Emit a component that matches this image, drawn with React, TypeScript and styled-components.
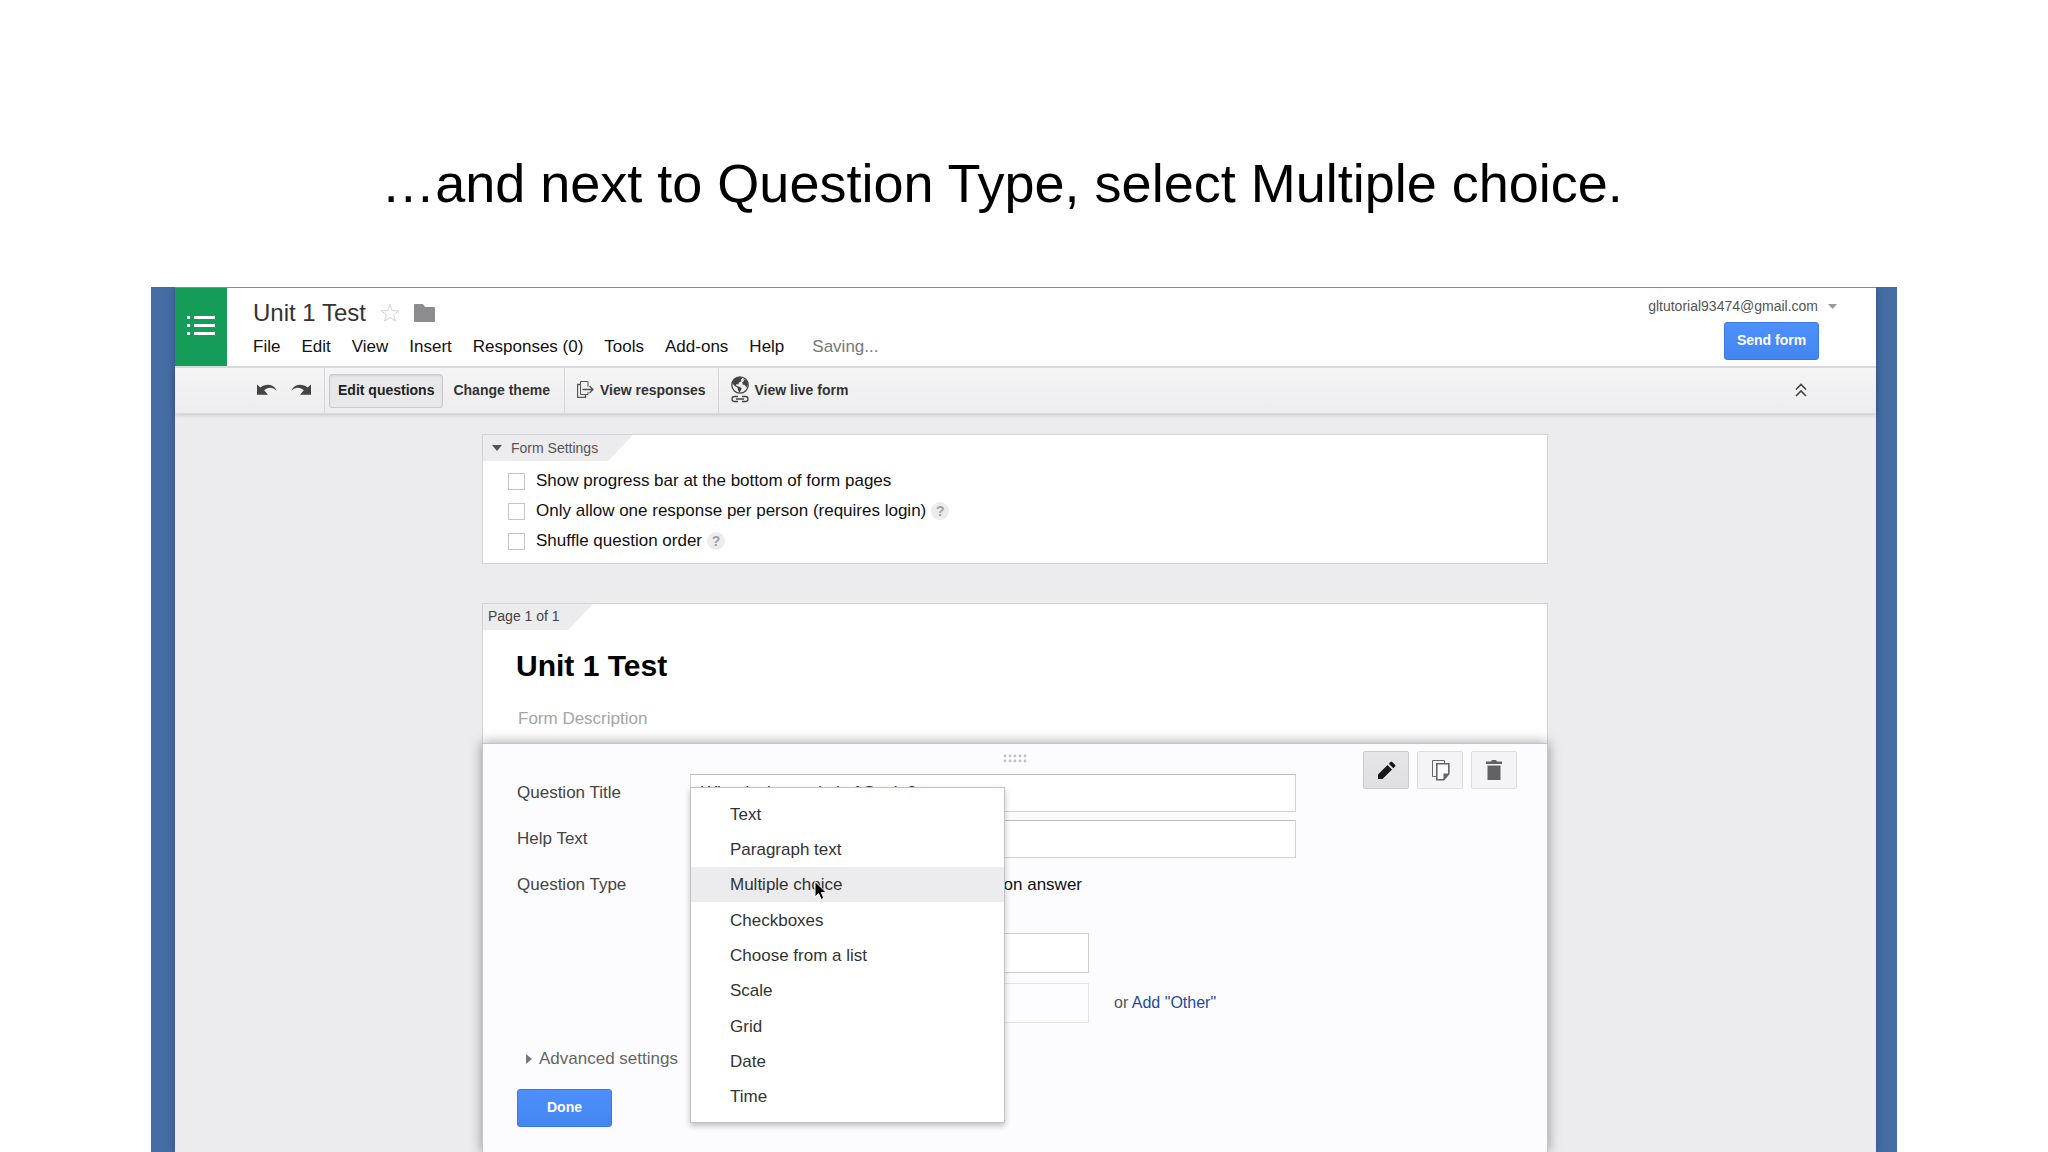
import React from "react";
import styled, { createGlobalStyle, css } from "styled-components";

const sans = `"Liberation Sans", Arial, Helvetica, sans-serif`;

const GlobalStyle = createGlobalStyle`
  *, *::before, *::after { box-sizing: border-box; }
  html, body { margin: 0; padding: 0; background: #fff; }
  body, button, input { font-family: ${sans}; }
  h1, h2, p { margin: 0; font-weight: normal; }
  button { margin: 0; padding: 0; border: 0; background: none; color: inherit; cursor: pointer; }
  svg { display: block; flex: none; }
`;

const Page = styled.div`
  display: flex;
  flex-direction: column;
  height: 100vh;
  overflow: hidden;
  padding: 0 151px;
`;

const Caption = styled.h1`
  flex: none;
  padding: 152px 44px 73px 0;
  font-size: 54px;
  line-height: 62px;
  text-align: center;
  white-space: nowrap;
  color: #000;
`;

const Desktop = styled.div`
  flex: 1;
  display: flex;
  padding: 0 21px 0 24px;
  overflow: hidden;
  background: #446ea4;
`;

const Window = styled.main`
  flex: 1;
  display: flex;
  flex-direction: column;
  min-width: 0;
  border-top: 1px solid #8b8b8d;
  background: #ecebee;
  box-shadow: 0 0 8px rgba(50, 40, 110, 0.55);
`;

const Header = styled.header`
  display: flex;
  flex: none;
  height: 80px;
  background: #fff;
  border-bottom: 2px solid #dfdfe1;
`;

const Logo = styled.div`
  display: flex;
  align-items: center;
  justify-content: center;
  width: 52px;
  padding-bottom: 2px;
  background: #149c58;
`;

const DocInfo = styled.div`
  flex: 1;
  display: flex;
  flex-direction: column;
  gap: 11px;
  padding: 12px 0 0 26px;
`;

const TitleRow = styled.div`
  display: flex;
  align-items: center;
  gap: 14px;
`;

const DocTitle = styled.h2`
  font-size: 24px;
  line-height: 26px;
  color: #333;
`;

const Menu = styled.nav`
  display: flex;
  gap: 21px;
  font-size: 17px;
  line-height: 20px;
  color: #111;
`;

const MenuButton = styled.button`
  font-size: 17px;
  line-height: 20px;
`;

const Status = styled.span`
  padding-left: 7px;
  color: #777;
`;

const Account = styled.div`
  display: flex;
  flex-direction: column;
  align-items: flex-end;
  gap: 8px;
  padding: 10px 39px 0 0;
`;

const AccountButton = styled.button`
  display: flex;
  align-items: center;
  gap: 10px;
  font-size: 14px;
  line-height: 16px;
  color: #555;
`;

const PrimaryButton = styled.button<{ $width: number }>`
  width: ${(p) => p.$width}px;
  height: 38px;
  padding-bottom: 2px;
  border: 1px solid #3b78e0;
  border-radius: 3px;
  background: linear-gradient(#4d90fe, #4486f0);
  color: #fff;
  font-size: 14px;
  font-weight: bold;
`;

const SendSlot = styled.div`
  padding-right: 18px;
`;

const Toolbar = styled.div`
  z-index: 1;
  flex: none;
  display: flex;
  align-items: center;
  height: 46px;
  padding: 0 69px 0 82px;
  background: linear-gradient(#f5f5f6, #ededef);
  border-bottom: 1px solid #dadadc;
  box-shadow: 0 1px 4px rgba(0, 0, 0, 0.16);
`;

const History = styled.div`
  display: flex;
  gap: 14px;
  padding: 0 9px 2px 0;
`;

const Divider = styled.span`
  align-self: stretch;
  width: 1px;
  margin: 0 4px;
  background: #d6d6d8;
`;

const ToolButton = styled.button<{ $active?: boolean; $icon?: boolean }>`
  display: flex;
  align-items: center;
  gap: 6px;
  height: 34px;
  padding: 0 ${(p) => (p.$icon ? 7 : 9)}px 2px;
  border: 1px solid transparent;
  border-radius: 3px;
  font-size: 14px;
  font-weight: bold;
  white-space: nowrap;
  color: #333;
  ${(p) =>
    p.$active &&
    css`
      padding: 0 8px 2px;
      border-color: #c9c9cb;
      background: linear-gradient(#e7e7e9, #e9e9eb);
      box-shadow: inset 0 1px 2px rgba(0, 0, 0, 0.08);
      color: #222;
    `}
`;

const Collapse = styled.button`
  margin-left: auto;
  padding-bottom: 2px;
`;

const Workspace = styled.div`
  flex: 1;
  display: flex;
  flex-direction: column;
  align-items: center;
  padding: 20px 21px 0 0;
`;

const Column = styled.div`
  flex: 1;
  display: flex;
  flex-direction: column;
  width: 100%;
  max-width: 1066px;
`;

const Card = styled.section`
  border: 1px solid #d3d2d5;
  background: #fff;
`;

const SettingsCard = styled(Card)`
  flex: none;
  margin-bottom: 39px;
`;

const PageCard = styled(Card)`
  flex: none;
  border-bottom: 0;
`;

const Tab = styled.div<{ $width: number }>`
  display: flex;
  align-items: center;
  width: ${(p) => p.$width}px;
  height: 26px;
  padding: 0 0 2px 5px;
  background: #ecebee;
  clip-path: polygon(0 0, 100% 0, calc(100% - 25px) 100%, 0 100%);
  font-size: 14px;
  line-height: 16px;
  color: #444;
`;

const TabButton = styled.button`
  display: flex;
  align-items: center;
  gap: 9px;
  padding: 1px 0 0 4px;
  font-size: 14px;
  line-height: 16px;
  color: #555;
`;

const Settings = styled.div`
  padding: 5px 25px 7px;
`;

const SettingRow = styled.div`
  display: flex;
  align-items: center;
  gap: 5px;
  height: 30px;
`;

const CheckLabel = styled.label<{ $gap: number }>`
  display: flex;
  align-items: center;
  gap: ${(p) => p.$gap}px;
  font-size: 17px;
  line-height: 20px;
  white-space: nowrap;
  color: #111;
`;

const Checkbox = styled.input.attrs({ type: "checkbox" })`
  appearance: none;
  width: 17px;
  height: 17px;
  margin: 0;
  border: 1px solid #c4c4c8;
  background: #fff;
`;

const HelpButton = styled.button`
  width: 18px;
  height: 18px;
  border-radius: 50%;
  background: #ececee;
  font-size: 14px;
  line-height: 18px;
  font-weight: bold;
  color: #a0a0a2;
`;

const PageIntro = styled.div`
  display: flex;
  flex-direction: column;
  gap: 26px;
  padding: 19px 33px 14px;
`;

const FormTitle = styled.h2`
  font-size: 30px;
  line-height: 34px;
  font-weight: bold;
  color: #000;
`;

const Description = styled.input`
  height: 20px;
  padding: 0 2px;
  border: 0;
  outline: 0;
  font-size: 17px;
  line-height: 20px;
  &::placeholder { color: #a5a5a7; opacity: 1; }
`;

const QuestionPanel = styled.section`
  flex: 1;
  display: grid;
  grid-template-columns: 1fr auto;
  grid-template-rows: 30px 1fr;
  padding: 0 30px 25px 34px;
  border: solid #c6c5c9;
  border-width: 1px 1px 0;
  background: #fcfbfe;
  box-shadow: 0 0 12px rgba(0, 0, 0, 0.4);
`;

const DragHandle = styled.div`
  grid-row: 1;
  grid-column: 1 / -1;
  justify-self: center;
  padding: 10px 4px 0 0;
`;

const Fields = styled.div`
  grid-row: 2;
  grid-column: 1;
`;

const Actions = styled.div`
  grid-row: 1 / span 2;
  grid-column: 2;
  display: flex;
  align-items: flex-start;
  gap: 8px;
  padding-top: 7px;
`;

const ActionButton = styled.button<{ $active?: boolean }>`
  display: flex;
  align-items: center;
  justify-content: center;
  width: 46px;
  height: 38px;
  border: 1px solid ${(p) => (p.$active ? "#cbcace" : "#dedde1")};
  border-radius: 2px;
  background: ${(p) => (p.$active ? "linear-gradient(#e6e6e8, #dfdfe1)" : "#f4f3f6")};
`;

const FieldGrid = styled.div`
  display: grid;
  grid-template-columns: 173px minmax(0, 606px);
  row-gap: 8px;
`;

const FieldLabel = styled.label`
  font-size: 17px;
  line-height: 38px;
  color: #444;
`;

const TextInput = styled.input`
  width: 100%;
  height: 38px;
  padding: 0 10px;
  border: 1px solid #d3d2d6;
  border-top-color: #bdbcc0;
  border-radius: 0;
  outline: 0;
  background: #fff;
  font-size: 17px;
  color: #333;
`;

const TypeCell = styled.div`
  position: relative;
  display: flex;
  align-items: center;
  justify-content: space-between;
  width: 392px;
`;

const TypeButton = styled.button`
  width: 150px;
  height: 36px;
  border: 1px solid #d3d2d6;
  background: #f4f3f6;
`;

const TypeMenu = styled.div`
  position: absolute;
  z-index: 2;
  left: 0;
  top: -79px;
  display: flex;
  flex-direction: column;
  width: 315px;
  height: 336px;
  padding: 8px 0;
  border: 1px solid #c3c2c6;
  background: #fff;
  box-shadow: 0 3px 6px rgba(0, 0, 0, 0.24);
`;

const TypeOption = styled.button<{ $active: boolean }>`
  position: relative;
  flex: 1;
  padding: 2px 0 0 39px;
  background: ${(p) => (p.$active ? "#ecebed" : "transparent")};
  font-size: 17px;
  text-align: left;
  color: #333;
`;

const Pointer = styled.svg`
  position: absolute;
  left: 123px;
  top: 13px;
`;

const Choices = styled.div`
  display: flex;
  flex-direction: column;
  gap: 10px;
  padding: 29px 0 24px 173px;
`;

const ChoiceRow = styled.div`
  display: flex;
  align-items: center;
  gap: 25px;
`;

const ChoiceInput = styled.input<{ $faded?: boolean }>`
  width: 399px;
  height: 40px;
  padding: 0 10px;
  border: 1px solid ${(p) => (p.$faded ? "#e4e3e7" : "#cfced2")};
  border-radius: 0;
  outline: 0;
  background: ${(p) => (p.$faded ? "#fdfcff" : "#fff")};
  font-size: 17px;
`;

const OrText = styled.span`
  font-size: 16px;
  line-height: 20px;
  color: #555;
`;

const AddLink = styled.a`
  color: #1a4b9c;
  text-decoration: none;
`;

const Advanced = styled.button`
  display: flex;
  align-items: center;
  gap: 7px;
  margin-bottom: 18px;
  padding-left: 9px;
  font-size: 17px;
  line-height: 24px;
  color: #666;
`;

const menuItems = ["File", "Edit", "View", "Insert", "Responses (0)", "Tools", "Add-ons", "Help"];

const settings = [
  { label: "Show progress bar at the bottom of form pages", help: false },
  { label: "Only allow one response per person (requires login)", help: true },
  { label: "Shuffle question order", help: true },
];

const questionTypes = [
  "Text",
  "Paragraph text",
  "Multiple choice",
  "Checkboxes",
  "Choose from a list",
  "Scale",
  "Grid",
  "Date",
  "Time",
];

const ListIcon = () => (
  <svg width="28" height="20" viewBox="0 0 28 20" fill="#fff">
    <path d="M0 0h3v3H0zM7 0h21v3H7zM0 8h3v3H0zM7 8h21v3H7zM0 16h3v3H0zM7 16h21v3H7z" />
  </svg>
);

const StarIcon = () => (
  <svg width="20" height="20" viewBox="0 0 20 20" fill="none" stroke="#d2d2d4" strokeWidth="1">
    <path d="M10 1.500l2.200 6.100 6.500.2-5.100 4 1.800 6.200-5.400-3.600L4.600 18l1.800-6.200-5.100-4 6.500-.2z" />
  </svg>
);

const FolderIcon = () => (
  <svg width="21" height="18" viewBox="0 0 21 18" fill="#8c8c8e">
    <path d="M1 0h8l2 3h9a1 1 0 0 1 1 1v13a1 1 0 0 1-1 1H1a1 1 0 0 1-1-1V1a1 1 0 0 1 1-1z" />
  </svg>
);

const UndoIcon = ({ flip }: { flip?: boolean }) => (
  <svg width="20" height="12" viewBox="0 0 20 12" fill="#444">
    <path
      transform={flip ? "matrix(-1 0 0 1 20 0)" : undefined}
      d="M0 .5l3.400 3C6 1.500 8.500.6 11.500.8c4 .3 6.800 2.600 8.300 6.200-2.400-2.400-5-3.400-7.800-3.100-2 .2-3.500.9-4.800 2.300L11 10.800H0z"
    />
  </svg>
);

const ResponsesIcon = () => (
  <svg width="17" height="17" viewBox="0 0 17 17" fill="none" stroke="#555" strokeWidth="1">
    <path d="M3.500 13.500V.5h7.500v5M11 11v2.500H3.500" />
    <path d="M3 3.500H.5v13h8V14M5.500 8.500h10M12.500 5l3.500 3.500-3.500 3.500" strokeWidth="1.300" />
  </svg>
);

const GlobeLinkIcon = () => (
  <svg width="18" height="27" viewBox="0 0 18 27" fill="none" stroke="#444" strokeWidth="1.300">
    <circle cx="9" cy="9" r="8.200" />
    <path
      fill="#444"
      stroke="none"
      d="M2 4.500C4 1.500 7 .8 9.500 1l2 1.200-1.600 1.500.6 1.600-2.500 1.300-.7 2-2.200-.6.400 2 2.300.4 2.800 1.500-.5 2.200-1.600 2.700-1.500-2.600-.4-2.500-2.500-1.500L1.800 8zM12.500 3l3 1.500 1.500 4-1.500 3-1.800-2.400-2-.6-.5-2.300 1.600-1z"
    />
    <path d="M7 20.500H3.500a2.500 2.500 0 0 0 0 5H7M11 20.500h3.500a2.500 2.500 0 0 1 0 5H11M5 23h8" />
  </svg>
);

const ChevronsIcon = () => (
  <svg width="12" height="14" viewBox="0 0 12 14" fill="none" stroke="#444" strokeWidth="1.600">
    <path d="M1 6.500l5-5 5 5M1 13l5-5 5 5" />
  </svg>
);

const Triangle = ({ points, width, height, color }: { points: string; width: number; height: number; color: string }) => (
  <svg width={width} height={height} viewBox={`0 0 ${width} ${height}`} fill={color}>
    <polygon points={points} />
  </svg>
);

const DotsIcon = () => (
  <svg width="24" height="9" viewBox="0 0 24 9" fill="#c2c1c5">
    {[0, 1, 2, 3, 4].map((i) => (
      <g key={i}>
        <circle cx={2 + i * 5} cy="2" r="1.400" />
        <circle cx={2 + i * 5} cy="7" r="1.400" />
      </g>
    ))}
  </svg>
);

const PencilIcon = () => (
  <svg width="19" height="19" viewBox="0 0 19 19" fill="#171719">
    <path d="M1 13.500L10.500 4l4.500 4.500L5.500 18H1zM11.800 2.700l1.700-1.700a1.200 1.200 0 0 1 1.700 0L18 3.800a1.200 1.200 0 0 1 0 1.700l-1.700 1.700z" />
  </svg>
);

const CopyIcon = () => (
  <svg width="19" height="22" viewBox="0 0 19 22" fill="none" stroke="#666">
    <path d="M5 17.500H1.500v-16h12V5" strokeWidth="1" />
    <path d="M5.800 4.800h12v10l-5 6h-7z" strokeWidth="1.600" fill="#fbfafc" />
    <path d="M18 14.500h-5.500V21z" fill="#666" stroke="none" />
  </svg>
);

const TrashIcon = () => (
  <svg width="16" height="20" viewBox="0 0 16 20" fill="#626264">
    <path d="M0 1.500h5L6 0h4l1 1.500h5V4H0zM1.500 5.500h13V20h-13z" />
  </svg>
);

export default function App() {
  return (
    <>
      <GlobalStyle />
      <Page>
        <Caption>…and next to Question Type, select Multiple choice.</Caption>
        <Desktop>
          <Window>
            <Header>
              <Logo>
                <ListIcon />
              </Logo>
              <DocInfo>
                <TitleRow>
                  <DocTitle>Unit 1 Test</DocTitle>
                  <button type="button" aria-label="Star">
                    <StarIcon />
                  </button>
                  <button type="button" aria-label="Move to folder">
                    <FolderIcon />
                  </button>
                </TitleRow>
                <Menu>
                  {menuItems.map((item) => (
                    <MenuButton key={item} type="button">
                      {item}
                    </MenuButton>
                  ))}
                  <Status>Saving...</Status>
                </Menu>
              </DocInfo>
              <Account>
                <AccountButton type="button">
                  gltutorial93474@gmail.com
                  <Triangle width={9} height={5} points="0,0 9,0 4.500,5" color="#999" />
                </AccountButton>
                <SendSlot>
                  <PrimaryButton type="button" $width={95}>
                    Send form
                  </PrimaryButton>
                </SendSlot>
              </Account>
            </Header>

            <Toolbar>
              <History>
                <button type="button" aria-label="Undo">
                  <UndoIcon />
                </button>
                <button type="button" aria-label="Redo">
                  <UndoIcon flip />
                </button>
              </History>
              <Divider />
              <ToolButton type="button" $active>
                Edit questions
              </ToolButton>
              <ToolButton type="button">Change theme</ToolButton>
              <Divider />
              <ToolButton type="button" $icon>
                <ResponsesIcon />
                View responses
              </ToolButton>
              <Divider />
              <ToolButton type="button" $icon>
                <GlobeLinkIcon />
                View live form
              </ToolButton>
              <Collapse type="button" aria-label="Hide menus">
                <ChevronsIcon />
              </Collapse>
            </Toolbar>

            <Workspace>
              <Column>
                <SettingsCard>
                  <Tab $width={150}>
                    <TabButton type="button">
                      <Triangle width={10} height={6} points="0,0 10,0 5,6" color="#555" />
                      Form Settings
                    </TabButton>
                  </Tab>
                  <Settings>
                    {settings.map((s) => (
                      <SettingRow key={s.label}>
                        <CheckLabel $gap={11}>
                          <Checkbox />
                          {s.label}
                        </CheckLabel>
                        {s.help && <HelpButton type="button">?</HelpButton>}
                      </SettingRow>
                    ))}
                  </Settings>
                </SettingsCard>

                <PageCard>
                  <Tab $width={110}>Page 1 of 1</Tab>
                  <PageIntro>
                    <FormTitle>Unit 1 Test</FormTitle>
                    <Description placeholder="Form Description" aria-label="Form Description" />
                  </PageIntro>
                </PageCard>

                <QuestionPanel>
                  <DragHandle>
                    <DotsIcon />
                  </DragHandle>
                  <Fields>
                    <FieldGrid>
                      <FieldLabel htmlFor="question-title">Question Title</FieldLabel>
                      <TextInput id="question-title" defaultValue="What is the capital of Spain?" />
                      <FieldLabel htmlFor="help-text">Help Text</FieldLabel>
                      <TextInput id="help-text" />
                      <FieldLabel htmlFor="question-type">Question Type</FieldLabel>
                      <TypeCell>
                        <TypeButton id="question-type" type="button" aria-haspopup="listbox" aria-expanded />
                        <CheckLabel $gap={8}>
                          <Checkbox />
                          Go to page based on answer
                        </CheckLabel>
                        <TypeMenu role="listbox" aria-label="Question Type">
                          {questionTypes.map((type) => {
                            const active = type === "Multiple choice";
                            return (
                              <TypeOption key={type} type="button" role="option" aria-selected={active} $active={active}>
                                {type}
                                {active && (
                                  <Pointer width="14" height="21" viewBox="0 0 14 21">
                                    <path
                                      d="M1 1.500v15.500l3.600-3.400 2.500 5.900 2.800-1.200-2.500-5.700h4.900z"
                                      fill="#000"
                                      stroke="#fff"
                                      strokeWidth="1"
                                    />
                                  </Pointer>
                                )}
                              </TypeOption>
                            );
                          })}
                        </TypeMenu>
                      </TypeCell>
                    </FieldGrid>
                    <Choices>
                      <ChoiceRow>
                        <ChoiceInput aria-label="Option 1" />
                      </ChoiceRow>
                      <ChoiceRow>
                        <ChoiceInput $faded aria-label="Add option" />
                        <OrText>
                          or <AddLink href="#other">Add "Other"</AddLink>
                        </OrText>
                      </ChoiceRow>
                    </Choices>
                    <Advanced type="button">
                      <Triangle width={6} height={10} points="0,0 6,5 0,10" color="#777" />
                      Advanced settings
                    </Advanced>
                    <PrimaryButton type="button" $width={95}>
                      Done
                    </PrimaryButton>
                  </Fields>
                  <Actions>
                    <ActionButton type="button" aria-label="Edit" $active>
                      <PencilIcon />
                    </ActionButton>
                    <ActionButton type="button" aria-label="Duplicate">
                      <CopyIcon />
                    </ActionButton>
                    <ActionButton type="button" aria-label="Delete">
                      <TrashIcon />
                    </ActionButton>
                  </Actions>
                </QuestionPanel>
              </Column>
            </Workspace>
          </Window>
        </Desktop>
      </Page>
    </>
  );
}
